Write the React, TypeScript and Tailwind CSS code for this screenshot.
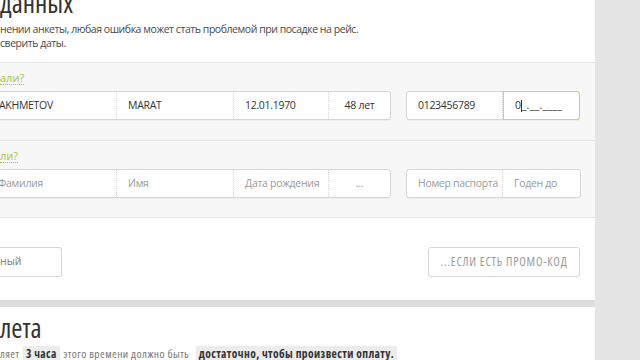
import React from "react";

const sans = { fontFamily: '"Open Sans", "DejaVu Sans", sans-serif' };
const cond = { fontStretch: "condensed" as const };

function Cell({
  w,
  children,
  placeholder,
  center,
  last,
}: {
  w: string;
  children?: React.ReactNode;
  placeholder?: boolean;
  center?: boolean;
  last?: boolean;
}) {
  return (
    <div
      className={`${w} h-full flex items-center px-[11px] whitespace-nowrap overflow-hidden ${
        center ? "justify-center" : ""
      } ${last ? "" : "border-r border-dotted border-[#d4d4d4]"} ${
        placeholder ? "text-[#9a9a9a]" : "text-[#333]"
      }`}
    >
      {children}
    </div>
  );
}

function Group({ children, className = "" }: { children: React.ReactNode; className?: string }) {
  return (
    <div
      className={`flex h-[29px] bg-white border border-[#d6d6d6] rounded-[3px] shadow-[0_1px_1px_rgba(0,0,0,0.04)] text-[10.5px] tracking-[-0.3px] ${className}`}
    >
      {children}
    </div>
  );
}

export default function App() {
  return (
    <div className="w-[640px] h-[360px] overflow-hidden bg-[#e3e3e3] flex" style={sans}>
      <div className="w-[595px] flex flex-col shrink-0">
        {/* Panel 1 */}
        <div className="bg-white h-[300px] flex flex-col shrink-0">
          <div className="h-[62px] flex flex-col">
            <div className="text-[27px] leading-[27px] text-[#333] -mt-[11px] h-[27px]" style={cond}>
              данных
            </div>
            <div className="text-[10.5px] leading-[14px] tracking-[-0.45px] text-[#4a4a4a] mt-[6px]">
              нении анкеты, любая ошибка может стать проблемой при посадке на рейс.
            </div>
            <div className="text-[10.5px] leading-[14px] tracking-[-0.45px] text-[#4a4a4a]">
              сверить даты.
            </div>
          </div>

          {/* Section 1 */}
          <div className="h-[78px] bg-[#f7f7f7] border-t border-[#e4e4e4] flex flex-col">
            <div className="h-[28px] flex items-center">
              <span className="text-[11px] text-[#a3c53b] border-b border-dotted border-[#a3c53b] leading-[13px] mt-[2px]">
                али?
              </span>
            </div>
            <div className="flex items-center">
              <Group className="-ml-[14px]">
                <Cell w="w-[130px]">
                  <span className="pl-[1px]">AKHMETOV</span>
                </Cell>
                <Cell w="w-[117px]">MARAT</Cell>
                <Cell w="w-[95px]">12.01.1970</Cell>
                <Cell w="w-[61px]" center last>
                  48 лет
                </Cell>
              </Group>
              <Group className="ml-[15px]">
                <Cell w="w-[96px]">0123456789</Cell>
                <div className="w-[77px] h-[29px] -my-px -mr-px flex items-center px-[11px] border border-[#c9d766] rounded-r-[3px] text-[#333] whitespace-nowrap">
                  0<span className="inline-block w-px h-[12px] bg-[#333]" />
                  <span className="tracking-[0.3px]">_.__.____</span>
                </div>
              </Group>
            </div>
          </div>

          {/* Section 2 */}
          <div className="h-[77px] bg-[#f7f7f7] border-t border-[#e4e4e4] flex flex-col">
            <div className="h-[28px] flex items-center">
              <span className="text-[11px] text-[#a3c53b] border-b border-dotted border-[#a3c53b] leading-[13px] mt-[2px]">
                ли?
              </span>
            </div>
            <div className="flex items-center">
              <Group className="-ml-[14px]">
                <Cell w="w-[130px]" placeholder>
                  Фамилия
                </Cell>
                <Cell w="w-[117px]" placeholder>
                  Имя
                </Cell>
                <Cell w="w-[95px]" placeholder>
                  Дата рождения
                </Cell>
                <Cell w="w-[61px]" placeholder center last>
                  ...
                </Cell>
              </Group>
              <Group className="ml-[15px]">
                <Cell w="w-[96px]" placeholder>
                  Номер паспорта
                </Cell>
                <Cell w="w-[77px]" placeholder last>
                  Годен до
                </Cell>
              </Group>
            </div>
          </div>

          {/* Section 3 */}
          <div className="flex-1 bg-white border-t border-[#e4e4e4] flex items-start pt-[29px]">
            <div className="w-[62px] h-[30px] border border-[#d6d6d6] border-l-0 rounded-r-[3px] flex items-center text-[10.5px] text-[#777]">
              ный
            </div>
            <div className="flex-1" />
            <div
              className="w-[152px] h-[30px] mr-[15px] border border-[#d6d6d6] rounded-[3px] flex items-center justify-center text-[12px] tracking-[0.8px] text-[#9a9a9a]"
              style={cond}
            >
              ...ЕСЛИ ЕСТЬ ПРОМО-КОД
            </div>
          </div>
        </div>

        <div className="h-[7px] bg-[#dedede] shrink-0" />

        {/* Panel 2 */}
        <div className="flex-1 bg-white flex flex-col">
          <div className="text-[27px] leading-[27px] text-[#333] mt-[7px]" style={cond}>
            лета
          </div>
          <div
            className="text-[11.5px] leading-[15px] tracking-[0.4px] text-[#777] mt-[5px] whitespace-nowrap"
            style={cond}
          >
            ляет{" "}
            <span className="bg-[#ececec] text-[#333] font-bold px-[3px] mx-[1px]">3 часа</span>{" "}
            этого времени должно быть{" "}
            <span className="bg-[#ececec] text-[#333] font-bold px-[3px] ml-[4px]">
              достаточно, чтобы произвести оплату.
            </span>
          </div>
        </div>
      </div>
      <div className="flex-1 bg-[#e5e5e5]" />
    </div>
  );
}
